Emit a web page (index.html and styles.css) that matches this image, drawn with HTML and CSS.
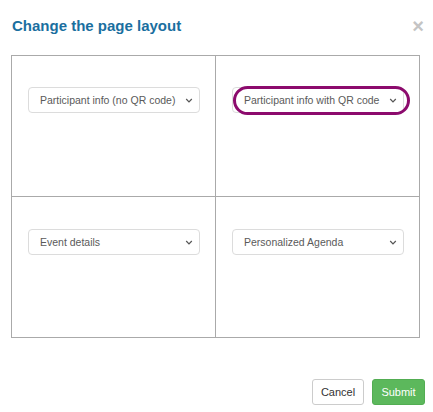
FILE: index.html
```html
<!DOCTYPE html>
<html>
<head>
<meta charset="utf-8">
<link rel="stylesheet" href="styles.css">
</head>
<body>
<div class="modal">
  <div class="header">
    <h2 class="title">Change the page layout</h2>
    <span class="close">×</span>
  </div>
  <div class="grid">
    <div class="cell">
      <div class="select">Participant info (no QR code)<svg class="chev" width="8" height="5" viewBox="0 0 8 5"><path d="M1.2 1 L4 3.8 L6.8 1" fill="none" stroke="#555" stroke-width="1.2"/></svg></div>
    </div>
    <div class="cell">
      <div class="select">Participant info with QR code<svg class="chev" width="8" height="5" viewBox="0 0 8 5"><path d="M1.2 1 L4 3.8 L6.8 1" fill="none" stroke="#555" stroke-width="1.2"/></svg><span class="highlight"></span></div>
    </div>
    <div class="cell row2">
      <div class="select">Event details<svg class="chev" width="8" height="5" viewBox="0 0 8 5"><path d="M1.2 1 L4 3.8 L6.8 1" fill="none" stroke="#555" stroke-width="1.2"/></svg></div>
    </div>
    <div class="cell row2">
      <div class="select">Personalized Agenda<svg class="chev" width="8" height="5" viewBox="0 0 8 5"><path d="M1.2 1 L4 3.8 L6.8 1" fill="none" stroke="#555" stroke-width="1.2"/></svg></div>
    </div>
  </div>
  <div class="footer">
    <button class="btn btn-cancel">Cancel</button>
    <button class="btn btn-submit">Submit</button>
  </div>
</div>
</body>
</html>
```
FILE: styles.css
```css
html, body {
  margin: 0;
  padding: 0;
  background: #fff;
  font-family: "Liberation Sans", Arial, sans-serif;
}
.modal {
  width: 433px;
  height: 412px;
  box-sizing: border-box;
}
.header {
  display: flex;
  justify-content: space-between;
  align-items: flex-start;
  padding: 16px 9px 0 12px;
  height: 55px;
  box-sizing: border-box;
}
.title {
  margin: 0;
  font-size: 15px;
  line-height: 19px;
  font-weight: bold;
  color: #1a6f9f;
}
.close {
  font-size: 20px;
  line-height: 20px;
  font-weight: bold;
  color: #c4c4c4;
  margin-top: 0;
}
.grid {
  margin-left: 11px;
  width: 409px;
  box-sizing: border-box;
  display: grid;
  grid-template-columns: 203px 203px;
  grid-template-rows: 140px 140px;
  gap: 1px;
  padding: 1px;
  background: #aaa;
}
.cell {
  background: #fff;
  padding: 31px 0 0 16px;
  box-sizing: border-box;
}
.cell.row2 {
  padding-top: 32px;
}
.select {
  position: relative;
  width: 172px;
  height: 26px;
  box-sizing: border-box;
  border: 1px solid #dcdcdc;
  border-radius: 4px;
  padding: 0 0 0 11px;
  display: flex;
  align-items: center;
  font-size: 10.5px;
  color: #5a5a5a;
}
.chev {
  position: absolute;
  right: 6px;
  top: 10px;
}
.highlight {
  position: absolute;
  left: 0px;
  top: -2px;
  width: 177px;
  height: 29px;
  box-sizing: border-box;
  border: 3px solid #8c0b6d;
  border-radius: 15px;
}
.footer {
  display: flex;
  justify-content: flex-end;
  gap: 8px;
  padding: 41px 8px 0 0;
}
.btn {
  height: 26px;
  font-family: "Liberation Sans", Arial, sans-serif;
  font-size: 11px;
  border-radius: 3px;
  padding: 0 6px;
  cursor: pointer;
}
.btn-cancel {
  background: #fff;
  border: 1px solid #ccc;
  color: #333;
  width: 52px;
}
.btn-submit {
  background: #5cb85c;
  border: 1px solid #52ad52;
  color: #fff;
  width: 53px;
}
```
